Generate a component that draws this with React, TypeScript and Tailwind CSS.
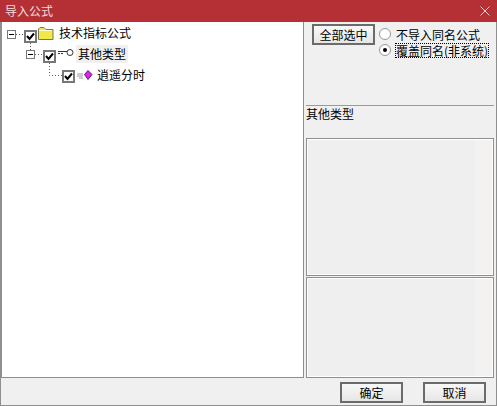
import type { ReactNode } from 'react';

const font = { fontFamily: '"Noto Sans CJK SC", "Liberation Sans", sans-serif' };

function Check() {
  return (
    <span className="flex h-[13px] w-[13px] shrink-0 items-center justify-center border-[2px] border-[#777] bg-white">
      <svg width="9" height="9" viewBox="0 0 9 9">
        <path d="M1 4 L3.5 7 L8 1.5" fill="none" stroke="#000" strokeWidth="2" />
      </svg>
    </span>
  );
}

function Minus() {
  return (
    <span className="flex h-[9px] w-[9px] shrink-0 translate-y-[1px] items-center justify-center border border-[#777] bg-white">
      <span className="h-px w-[5px] bg-black" />
    </span>
  );
}

function Folder() {
  return (
    <svg width="16" height="13" viewBox="0 0 16 13" className="shrink-0">
      <path d="M0.5 12.5 V2 L2 0.5 H6 L8 2.5 H15 V12.5 Z" fill="#f2e84a" stroke="#77775a" />
      <path d="M1 3.5 H14" stroke="#fffbd0" />
    </svg>
  );
}

function KeyIcon() {
  return (
    <svg width="16" height="9" viewBox="0 0 16 9" className="shrink-0 -translate-y-[1px]">
      <path d="M0 3.5 H9 M0 5.5 H2 M3 5.5 H5" stroke="#333" fill="none" />
      <circle cx="12" cy="4.5" r="3" fill="#fff" stroke="#333" />
    </svg>
  );
}

function Diamond() {
  return (
    <svg width="16" height="10" viewBox="0 0 16 10" className="shrink-0">
      <path d="M0 4 H6 M0 6 H6 M2 8 H6" stroke="#999" />
      <path d="M11 0.5 L15 4.5 L11 9.5 L7.5 4.5 Z" fill="#e81ee0" stroke="#4a2080" />
    </svg>
  );
}

function Row({ pad, children }: { pad: string; children: ReactNode }) {
  return <div className={`flex h-[21px] items-center ${pad}`}>{children}</div>;
}

function Radio({ on, children }: { on?: boolean; children: ReactNode }) {
  return (
    <div className="flex h-[16px] items-center">
      <span className="mr-[5px] flex h-[12px] w-[12px] items-center justify-center rounded-full border border-[#999] bg-white">
        {on && <span className="h-[4px] w-[4px] rounded-full bg-black" />}
      </span>
      <span className={on ? 'leading-[13px] outline-1 outline-dotted outline-black' : 'leading-[13px]'}>{children}</span>
    </div>
  );
}

function DlgButton({ children }: { children: ReactNode }) {
  return (
    <button className="h-[21px] w-[63px] border-[2px] border-[#6b6b6b] bg-gradient-to-b from-[#f8f8f8] to-[#e6e6e6] text-[12px] leading-none text-black">
      {children}
    </button>
  );
}

function Box({ h }: { h: string }) {
  return (
    <div className={`flex border border-[#8f8f8f] bg-[#efefef] shadow-[inset_1px_1px_0_#fff,inset_-1px_-1px_0_#fff] ${h}`}>
      <div className="my-[1px] ml-auto mr-[1px] w-[18px] bg-[#f3f2f0]" />
    </div>
  );
}

export default function App() {
  return (
    <div className="flex h-[406px] w-[497px] flex-col overflow-hidden bg-[#f0f0f0] text-[12px] text-black" style={font}>
      <div className="flex h-[22px] shrink-0 items-center justify-between bg-[#b53035] pl-[5px] pr-[7px] text-[#f3dcdc]">
        <span>导入公式</span>
        <svg width="10" height="10" viewBox="0 0 10 10">
          <path d="M0.5 0.5 L9.5 9.5 M9.5 0.5 L0.5 9.5" stroke="#ecc" fill="none" />
        </svg>
      </div>
      <div className="flex min-h-0 flex-1 border-x border-b border-[#8f8f8f]">
        <div className="relative h-full w-[303px] shrink-0 self-stretch">
          <div className="h-[356px] border border-t-0 border-[#8f8f8f] bg-white">
            <svg width="70" height="70" className="absolute left-0 top-0" viewBox="0 0 70 70">
              <path d="M15 12.5 H23 M29.5 21 V28 M34 32.5 H42 M48.5 41 V53.5 H61" stroke="#555" strokeDasharray="1 2" fill="none" />
            </svg>
            <Row pad="relative pl-[5px] pt-[1px]">
              <Minus />
              <span className="ml-[8px] translate-y-[3px]"><Check /></span>
              <span className="ml-[1px]"><Folder /></span>
              <span className="ml-[5px]">技术指标公式</span>
            </Row>
            <Row pad="relative pl-[24px]">
              <Minus />
              <span className="ml-[8px] translate-y-[3px]"><Check /></span>
              <span className="ml-[2px]"><KeyIcon /></span>
              <span className="ml-[2px] bg-[#f0f0f0] px-[2px] leading-[18px]">其他类型</span>
            </Row>
            <Row pad="relative pl-[60px]">
              <span className="translate-y-[2px]"><Check /></span>
              <span className="ml-[2px]"><Diamond /></span>
              <span className="ml-[4px]">逍遥分时</span>
            </Row>
          </div>
          <div className="flex h-[28px] w-[496px] items-start justify-end gap-[20px] pr-[11px] pt-[4px]">
            <DlgButton>确定</DlgButton>
            <DlgButton>取消</DlgButton>
          </div>
        </div>
        <div className="flex w-[191px] flex-col pl-[2px] pr-[1px]">
          <div className="flex h-[83px] pl-[6px] pt-[2px]">
            <button className="h-[21px] w-[63px] border-[2px] border-[#6b6b6b] bg-gradient-to-b from-[#f8f8f8] to-[#e6e6e6] leading-none">全部选中</button>
            <div className="ml-[4px] flex flex-col pt-[2px]">
              <Radio>不导入同名公式</Radio>
              <Radio on>覆盖同名(非系统)</Radio>
            </div>
          </div>
          <div className="h-[31px] border-t border-[#9a9a9a] leading-[15px]">其他类型</div>
          <div className="mt-[2px]"><Box h="h-[138px]" /></div>
          <div className="mt-[1px]"><Box h="h-[101px]" /></div>
        </div>
      </div>
    </div>
  );
}
